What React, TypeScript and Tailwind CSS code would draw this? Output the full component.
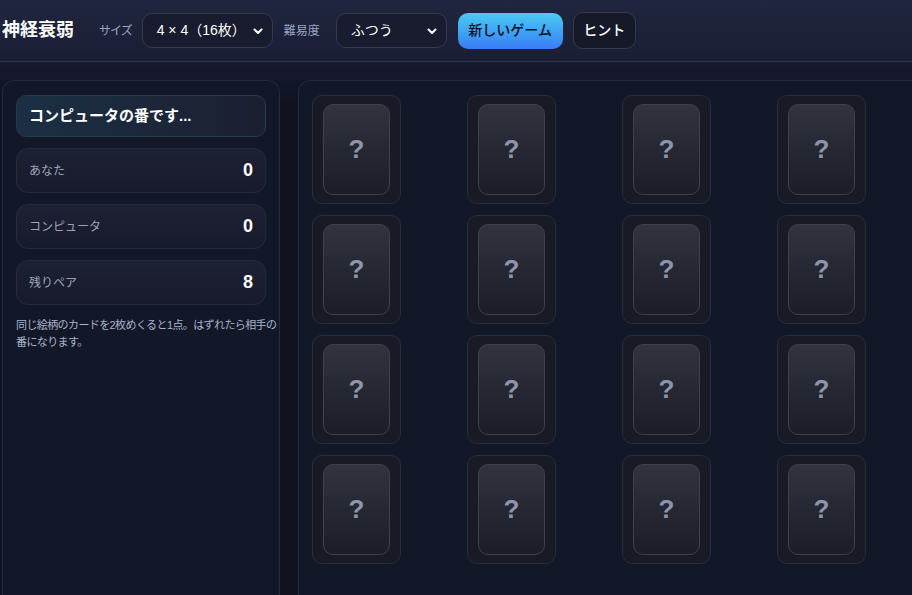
import { FC } from "react";

const font = { fontFamily: '"Liberation Sans", "Noto Sans CJK JP", sans-serif' };

const Chevron: FC = () => (
  <svg width="12" height="12" viewBox="0 0 24 24" fill="none" stroke="currentColor" strokeWidth="4" strokeLinecap="round" strokeLinejoin="round">
    <path d="M5 9l7 7 7-7" />
  </svg>
);

type SelectProps = { value: string; width: string };

const FakeSelect: FC<SelectProps> = ({ value, width }) => (
  <div className={`flex h-[35px] ${width} items-center justify-between rounded-[10px] border border-[#343a50] bg-[#181c2e] pl-[14px] pr-[8px] text-[14px] text-white`}>
    <span>{value}</span>
    <Chevron />
  </div>
);

const ScoreRow: FC<{ label: string; value: number }> = ({ label, value }) => (
  <div className="flex h-[45px] items-center justify-between rounded-[12px] border border-[#272b3d] bg-gradient-to-b from-[#1d2134] to-[#171a2a] pl-[12px] pr-[12px]">
    <span className="text-[12px] text-[#9aa3b8]">{label}</span>
    <span className="text-[18px] font-bold text-white">{value}</span>
  </div>
);

const Card: FC = () => (
  <div className="flex h-[109px] w-[89px] items-center justify-center rounded-[10px] border border-[#2a2d3a] bg-[#181b26]">
    <div className="flex h-[91px] w-[67px] items-center justify-center rounded-[10px] border border-[#3d404d] bg-gradient-to-b from-[#31343f] via-[#252732] to-[#1b1d28]">
      <span className="text-[26px] font-bold text-[#8e94aa]">?</span>
    </div>
  </div>
);

export default function App() {
  return (
    <div style={font} className="h-[595px] w-full overflow-hidden bg-[#10131f]">
      <header className="flex h-[62px] w-[940px] items-center border-b border-[#2f3450] bg-gradient-to-b from-[#20263f] to-[#1a1e35] pl-[2px]">
        <h1 className="mr-[25px] text-[18px] font-bold text-white">神経衰弱</h1>
        <span className="mr-[10px] text-[12px] tracking-[-1px] text-[#9aa6c2]">サイズ</span>
        <FakeSelect value="4 × 4（16枚）" width="w-[131px]" />
        <span className="ml-[11px] mr-[16px] text-[12px] text-[#9aa6c2]">難易度</span>
        <FakeSelect value="ふつう" width="w-[111px]" />
        <button className="ml-[11px] h-[36px] w-[105px] rounded-[10px] bg-gradient-to-b from-[#4ccaf2] to-[#3b7cf6] text-[14px] font-medium text-[#0b1020]">
          新しいゲーム
        </button>
        <button className="ml-[10px] h-[37px] w-[63px] rounded-[10px] border border-[#343a50] bg-[#161a28] text-[14px] font-medium text-white">
          ヒント
        </button>
      </header>

      <main className="flex w-[940px] gap-[18px] bg-gradient-to-b from-[#171a2f] to-[#10131f] to-[40px] pl-[2px] pt-[18px]">
        <aside className="flex h-[600px] w-[278px] shrink-0 flex-col gap-[11px] rounded-[12px] border border-[#262b3d] bg-[#131829] px-[13px] pt-[14px]">
          <div className="flex h-[42px] items-center rounded-[10px] border border-[#2c3a4d] bg-gradient-to-r from-[#1b3045] to-[#1b1f30] pl-[12px] text-[15px] font-bold text-white">
            コンピュータの番です...
          </div>
          <ScoreRow label="あなた" value={0} />
          <ScoreRow label="コンピュータ" value={0} />
          <ScoreRow label="残りペア" value={8} />
          <p className="mt-[1px] w-[262px] text-[11px] leading-[17px] tracking-[-0.6px] text-[#a9b4c8]">
            同じ絵柄のカードを2枚めくると1点。はずれたら相手の番になります。
          </p>
        </aside>

        <section className="h-[600px] w-[640px] shrink-0 rounded-[12px] border border-[#262b3d] bg-[#131829] pl-[13px] pt-[14px]">
          <div className="grid grid-cols-[repeat(4,144px)] gap-[11px]">
            {Array.from({ length: 16 }).map((_, i) => (
              <Card key={i} />
            ))}
          </div>
        </section>
      </main>
    </div>
  );
}
